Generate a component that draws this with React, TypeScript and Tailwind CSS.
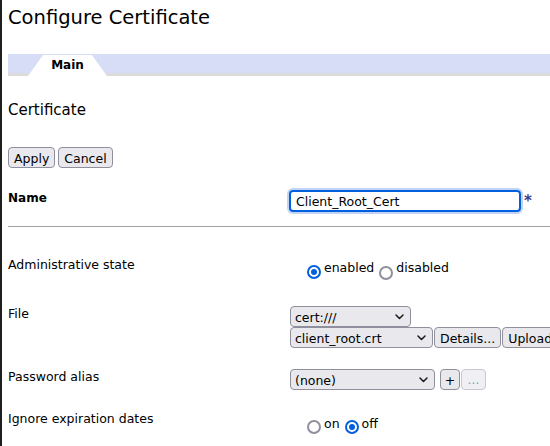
import React from "react";

function Chevron() {
  return (
    <svg width="9" height="6" viewBox="0 0 9 6" className="shrink-0">
      <polyline
        points="1,1 4.5,4.5 8,1"
        fill="none"
        stroke="#1b1b1b"
        strokeWidth="1.5"
        strokeLinecap="round"
        strokeLinejoin="round"
      />
    </svg>
  );
}

function Select({ text, w }: { text: string; w: string }) {
  return (
    <div
      className={`${w} h-[21px] shrink-0 flex items-center justify-between pl-[4px] pr-[6px] border border-[#8f8f9d] rounded-[4px] bg-[#e9e9ed]`}
    >
      <span className="leading-[15px] pt-[1px]">{text}</span>
      <Chevron />
    </div>
  );
}

function Btn({ children, cls = "" }: { children: React.ReactNode; cls?: string }) {
  return (
    <div
      className={`h-[21px] shrink-0 flex items-center justify-center px-[5px] pt-[1px] border border-[#8f8f9d] rounded-[4px] bg-[#e9e9ed] leading-[15px] whitespace-nowrap ${cls}`}
    >
      {children}
    </div>
  );
}

function Radio({ checked, label, mt }: { checked: boolean; label: string; mt: string }) {
  return (
    <div className="flex items-start">
      <span
        className={`ml-[5px] mr-[3px] ${mt} w-[14px] h-[14px] shrink-0 rounded-full border-2 bg-white flex items-center justify-center ${
          checked ? "border-[#0060df]" : "border-[#8f8f9d]"
        }`}
      >
        {checked && <span className="w-[6px] h-[6px] rounded-full bg-[#0060df]" />}
      </span>
      <span className="leading-[15px]">{label}</span>
    </div>
  );
}

export default function App() {
  return (
    <div className="flex w-[550px] h-[446px] overflow-hidden bg-white text-black font-['DejaVu_Sans',Verdana,sans-serif] text-[12.5px]">
      <div className="w-[2px] shrink-0 bg-[#1e1e1e]" />
      <div className="flex-1 min-w-0 pl-[6px] flex flex-col">
        <h1 className="mt-[6px] text-[19.5px] leading-[24px] whitespace-nowrap">Configure Certificate</h1>

        <div className="mt-[24px] h-[22px] bg-[#d8ddf7] border-b-[3px] border-[#dcdcdc] flex">
          <div className="relative ml-[20px] mt-[1px] w-[79px] h-[21px] shrink-0">
            <svg width="79" height="21" viewBox="0 0 79 21" className="absolute inset-0">
              <polygon points="15,0 64,0 79,21 0,21" fill="#ffffff" />
            </svg>
            <span className="absolute left-0 right-0 top-[3px] text-center font-bold text-[12px] leading-[15px]">
              Main
            </span>
          </div>
        </div>

        <h2 className="mt-[24px] text-[15px] leading-[20px]">Certificate</h2>

        <div className="mt-[27px] flex gap-[3px]">
          <Btn>Apply</Btn>
          <Btn>Cancel</Btn>
        </div>

        <div className="mt-[22px] flex items-start">
          <div className="w-[281px] shrink-0 pt-[1px] font-bold text-[12px] leading-[15px]">Name</div>
          <div className="w-[232px] h-[22px] shrink-0 flex items-center pl-[5px] border-2 border-[#0060df] rounded-[4px] shadow-[0_0_0_2px_#c3d3f3]">
            <span className="leading-[15px] pt-[1px]">Client_Root_Cert</span>
          </div>
          <span className="ml-[3px] pt-[4px] text-[15px] font-bold leading-[15px] text-[#3d3a8a]">*</span>
        </div>

        <div className="mt-[14px] h-px bg-[#a0a0a0] shrink-0" />

        <div className="mt-[30px] h-[49px] flex items-start shrink-0">
          <div className="w-[281px] shrink-0 leading-[15px]">Administrative state</div>
          <div className="pl-[13px] pt-[3px] flex">
            <Radio checked label="enabled" mt="mt-[5px]" />
            <Radio checked={false} label="disabled" mt="mt-[6px]" />
          </div>
        </div>

        <div className="h-[63px] flex items-start shrink-0">
          <div className="w-[281px] shrink-0 leading-[15px]">File</div>
          <div className="pl-[1px] flex flex-col">
            <Select text="cert:///" w="w-[121px]" />
            <div className="flex gap-[1px]">
              <Select text="client_root.crt" w="w-[143px]" />
              <Btn>Details...</Btn>
              <Btn>Upload...</Btn>
            </div>
          </div>
        </div>

        <div className="h-[42px] flex items-start shrink-0">
          <div className="w-[281px] shrink-0 leading-[15px]">Password alias</div>
          <div className="pl-[1px] flex">
            <Select text="(none)" w="w-[145px]" />
            <Btn cls="ml-[5px] w-[20px] px-0">+</Btn>
            <div className="ml-[1px] w-[25px] h-[21px] flex items-center justify-center border border-[#c9c9d1] rounded-[4px] bg-[#f0f0f4] text-[#9a9aa6] leading-[15px]">
              ...
            </div>
          </div>
        </div>

        <div className="flex items-start shrink-0">
          <div className="w-[281px] shrink-0 leading-[15px]">Ignore expiration dates</div>
          <div className="pl-[13px] pt-[5px] flex">
            <Radio checked={false} label="on" mt="mt-[4px]" />
            <Radio checked label="off" mt="mt-[4px]" />
          </div>
        </div>
      </div>
    </div>
  );
}
